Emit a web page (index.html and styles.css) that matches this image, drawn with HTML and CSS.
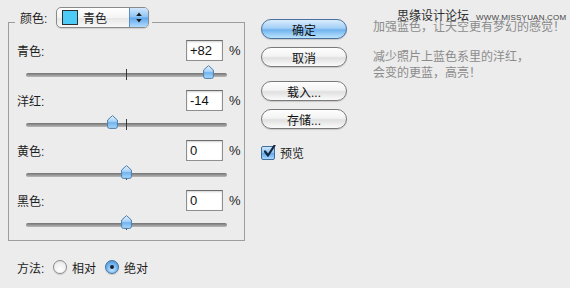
FILE: index.html
```html
<!DOCTYPE html>
<html lang="zh-CN">
<head>
  <meta charset="UTF-8">
  <title>可选颜色</title>
  <link rel="stylesheet" href="styles.css">
</head>
<body>
  <!-- Left: colour group + method -->
  <div class="panel">
    <div class="group">
      <div class="group-head">
        <span class="group-label">颜色:</span>
        <div class="popup">
          <span class="swatch"></span>
          <span class="popup-text">青色</span>
          <span class="popup-arrows">
            <svg width="6" height="11" viewBox="0 0 6 11"><path d="M3 0.5 L5.8 4 H0.2 Z M0.2 7 H5.8 L3 10.5 Z" fill="#1b1b1b"/></svg>
          </span>
        </div>
      </div>

      <div class="rows">
        <div class="row">
          <div class="row-top">
            <span>青色:</span>
            <input class="value" type="text" value="+82">
            <span class="unit">%</span>
          </div>
          <div class="slider">
            <span class="track"></span>
            <span class="tick"></span>
            <svg class="thumb" style="left: 177px" width="11" height="14" viewBox="0 0 11 14"><use href="#thumb"/></svg>
          </div>
        </div>
        <div class="row">
          <div class="row-top">
            <span>洋红:</span>
            <input class="value" type="text" value="-14">
            <span class="unit">%</span>
          </div>
          <div class="slider">
            <span class="track"></span>
            <span class="tick"></span>
            <svg class="thumb" style="left: 81px" width="11" height="14" viewBox="0 0 11 14"><use href="#thumb"/></svg>
          </div>
        </div>
        <div class="row">
          <div class="row-top">
            <span>黄色:</span>
            <input class="value" type="text" value="0">
            <span class="unit">%</span>
          </div>
          <div class="slider">
            <span class="track"></span>
            <span class="tick"></span>
            <svg class="thumb" style="left: 95px" width="11" height="14" viewBox="0 0 11 14"><use href="#thumb"/></svg>
          </div>
        </div>
        <div class="row">
          <div class="row-top">
            <span>黑色:</span>
            <input class="value" type="text" value="0">
            <span class="unit">%</span>
          </div>
          <div class="slider">
            <span class="track"></span>
            <span class="tick"></span>
            <svg class="thumb" style="left: 95px" width="11" height="14" viewBox="0 0 11 14"><use href="#thumb"/></svg>
          </div>
        </div>
      </div>
    </div>

    <div class="method">
      <span class="method-label">方法:</span>
      <span class="radio"></span>
      <span class="radio-text">相对</span>
      <span class="radio on"></span>
      <span class="radio-text">绝对</span>
    </div>
  </div>

  <!-- Buttons -->
  <div class="actions">
    <div class="btn default">确定</div>
    <div class="btn">取消</div>
    <div class="btn gap">载入...</div>
    <div class="btn">存储...</div>
    <div class="check">
      <span class="checkbox">
        <svg width="14" height="14" viewBox="0 0 14 14"><path d="M3 6.5 L6 10.5 L12.5 0.5" fill="none" stroke="#15283f" stroke-width="2.2" stroke-linecap="round" stroke-linejoin="round"/></svg>
      </span>
      <span>预览</span>
    </div>
  </div>

  <!-- Notes -->
  <div class="notes">
    <div class="watermark">思缘设计论坛<span class="wm-url">WWW.MISSYUAN.COM</span></div>
    <p class="note-first">加强蓝色，让天空更有梦幻的感觉！</p>
    <p class="note">减少照片上蓝色系里的洋红，<br>会变的更蓝，高亮！</p>
  </div>

  <!-- shared slider thumb -->
  <svg width="0" height="0" class="defs">
    <defs>
      <linearGradient id="thumb-fill" x1="0" y1="0" x2="0" y2="1">
        <stop offset="0" stop-color="#e4f1fd"/>
        <stop offset="0.45" stop-color="#a9d2f7"/>
        <stop offset="0.55" stop-color="#72b4ef"/>
        <stop offset="1" stop-color="#a8d8fb"/>
      </linearGradient>
      <path id="thumb" d="M5.5 0.6 L10.4 5 V11.6 Q10.4 13.4 8.6 13.4 H2.4 Q0.6 13.4 0.6 11.6 V5 Z" fill="url(#thumb-fill)" stroke="#4f7ea9" stroke-width="1"/>
    </defs>
  </svg>
</body>
</html>
```

FILE: styles.css
```css
/* Dialog base */
body {
  margin: 0;
  height: 288px;
  overflow: hidden;
  display: flex;
  background-color: #ececec;
  font-family: "Liberation Sans", "Noto Sans CJK SC", sans-serif;
  font-size: 12px;
  color: #1c1c1c;
}

.defs {
  position: absolute;
}

/* Left panel */
.panel {
  width: 237px;
  padding-left: 8px;
}

.group {
  box-sizing: border-box;
  width: 237px;
  margin-top: 22px;
  border: 1px solid #9d9d9d;
}

.group-head {
  display: flex;
  align-items: center;
  width: fit-content;
  height: 21px;
  margin: -16px 0 0 6px;
  padding: 0 3px 0 5px;
  background-color: #ececec;
}

.group-label {
  width: 36px;
}

/* Popup menu */
.popup {
  display: flex;
  align-items: center;
  box-sizing: border-box;
  width: 93px;
  height: 21px;
  border: 1px solid #8a8a8a;
  border-radius: 5px;
  overflow: hidden;
  background: linear-gradient(#ffffff, #f4f4f4 50%, #e6e6e6 51%, #f7f7f7);
  box-shadow: 0 1px 1px rgba(0, 0, 0, 0.12);
}

.swatch {
  box-sizing: border-box;
  width: 16px;
  height: 15px;
  margin-left: 5px;
  background-color: #4ccbf7;
  border: 1px solid #2e2e2e;
}

.popup-text {
  flex: 1;
  margin-left: 5px;
}

.popup-arrows {
  display: flex;
  align-items: center;
  justify-content: center;
  width: 18px;
  height: 100%;
  border-left: 1px solid #5a8dc0;
  background: linear-gradient(#d0e7fc, #8cc3f3 48%, #5fa7ec 52%, #b2dcfd);
}

/* Slider rows */
.rows {
  padding-top: 12px;
}

.row {
  height: 50px;
  padding: 0 6px 0 8px;
}

.row-top {
  display: flex;
  align-items: center;
  height: 21px;
}

.value {
  box-sizing: border-box;
  width: 37px;
  height: 21px;
  margin: 0 0 0 auto;
  padding: 0 0 0 3px;
  border: 1px solid #8f8f8f;
  border-top-color: #6c6c6c;
  background-color: #fff;
  box-shadow: inset 0 1px 2px rgba(0, 0, 0, 0.18);
  font-family: "Liberation Sans", sans-serif;
  font-size: 13px;
  color: #111;
  outline: none;
}

.unit {
  width: 9px;
  margin-left: 6px;
  font-size: 13px;
}

.slider {
  position: relative;
  width: 201px;
  height: 14px;
  margin: 8px 0 0 9px;
}

.track {
  position: absolute;
  left: 0;
  right: 0;
  top: 4px;
  height: 4px;
  border-radius: 2px;
  background: linear-gradient(#727272, #9c9c9c 60%, #bababa);
}

.tick {
  position: absolute;
  left: 100px;
  top: 0;
  width: 1px;
  height: 11px;
  background-color: #3a3a3a;
}

.thumb {
  position: absolute;
  top: -4px;
}

/* Method radios */
.method {
  display: flex;
  align-items: center;
  height: 16px;
  margin-top: 18px;
  padding-left: 9px;
}

.method-label {
  width: 36px;
}

.radio {
  position: relative;
  box-sizing: border-box;
  width: 14px;
  height: 14px;
  border: 1px solid #8c8c8c;
  border-radius: 50%;
  background: radial-gradient(circle at 50% 70%, #ffffff, #f1f1f1 55%, #d6d6d6);
  box-shadow: 0 1px 1px rgba(0, 0, 0, 0.15);
}

.radio.on {
  margin-left: 9px;
  border-color: #41719f;
  background: radial-gradient(circle at 50% 70%, #c6e6ff, #6fb3f0 55%, #3f87d2);
}

.radio.on::after {
  content: "";
  position: absolute;
  left: 4px;
  top: 4px;
  width: 4px;
  height: 4px;
  border-radius: 50%;
  background-color: #16222e;
}

.radio-text {
  margin-left: 5px;
}

/* Buttons */
.actions {
  display: flex;
  flex-direction: column;
  width: 86px;
  margin-left: 16px;
  padding-top: 19px;
}

.btn {
  display: flex;
  align-items: center;
  justify-content: center;
  box-sizing: border-box;
  height: 20px;
  margin-top: 8px;
  border: 1px solid #7a7a7a;
  border-radius: 10px;
  background: linear-gradient(#fefefe, #f3f3f3 45%, #e0e0e0 55%, #fbfbfb);
  box-shadow: 0 1px 1px rgba(0, 0, 0, 0.15);
  color: #111;
}

.btn.default {
  margin-top: 0;
  border-color: #4b6f9b;
  background: linear-gradient(#d9edfd, #a4cff6 45%, #70b3ef 55%, #bde4fd);
}

.btn.gap {
  margin-top: 14px;
}

.check {
  display: flex;
  align-items: center;
  margin-top: 15px;
}

.checkbox {
  box-sizing: border-box;
  width: 14px;
  height: 14px;
  margin-right: 5px;
  border: 1px solid #3f6d9c;
  border-radius: 2px;
  background: linear-gradient(#cfe7fd, #86c1f3 50%, #5ea6ea 51%, #a9d8fc);
  overflow: visible;
}

.checkbox svg {
  display: block;
  margin: -2px 0 0 0;
}

/* Notes */
.notes {
  position: relative;
  margin-left: 26px;
  color: #8b8b8b;
  line-height: 16px;
  white-space: nowrap;
}

.notes p {
  margin: 0;
}

.note-first {
  margin-top: 19px !important;
}

.note {
  margin-top: 14px !important;
}

.watermark {
  position: absolute;
  left: 24px;
  top: 9px;
  color: #2e2e2e;
  line-height: 14px;
}

.wm-url {
  margin-left: 7px;
  font-size: 8px;
  letter-spacing: 0.2px;
  color: #444;
}
```
